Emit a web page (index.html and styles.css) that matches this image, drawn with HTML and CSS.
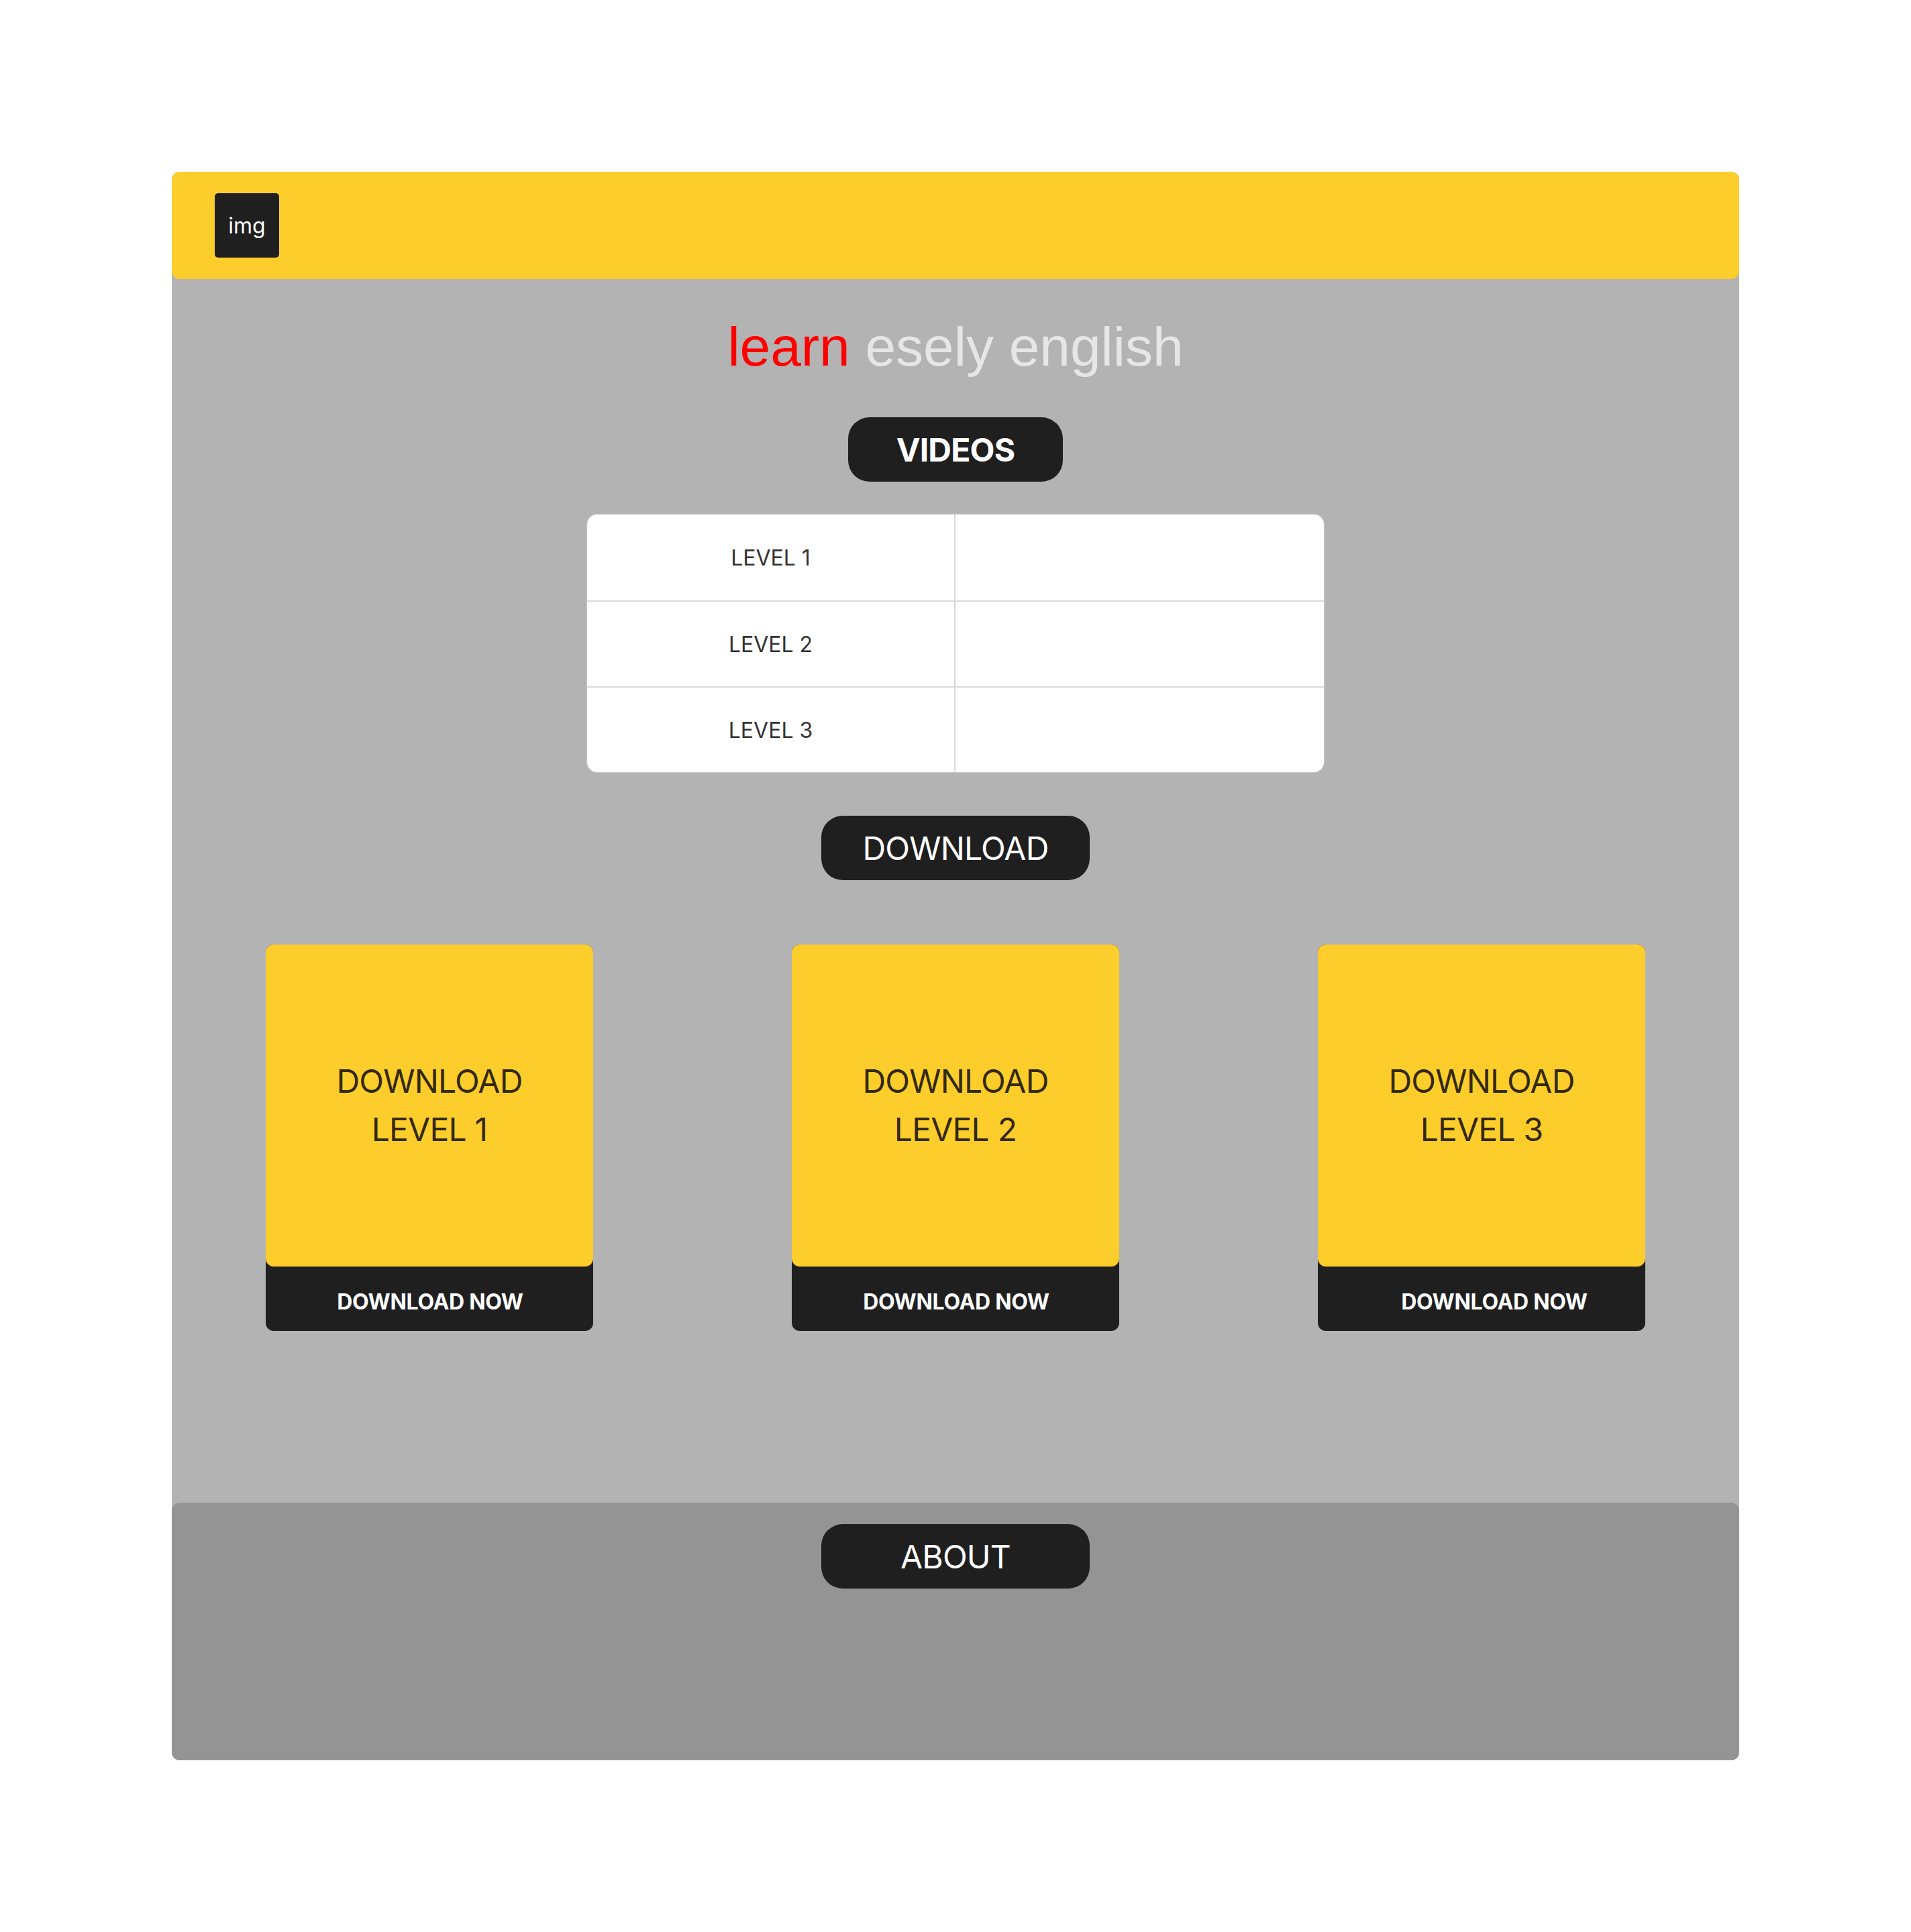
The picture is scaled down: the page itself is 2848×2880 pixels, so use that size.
FILE: index.html
```html
<!DOCTYPE html>
<html lang="en">
<head>
<meta charset="utf-8">
<title>learn esely english</title>
<link rel="stylesheet" href="styles.css">
</head>
<body>
<div class="page">
  <header class="topbar">
    <div class="logo">img</div>
  </header>
  <main class="content">
    <h1 class="title"><span class="title-red">learn</span> esely english</h1>
    <div class="pill pill-videos">VIDEOS</div>
    <div class="levels">
      <div class="level-row"><div class="level-name">LEVEL 1</div><div class="level-video"></div></div>
      <div class="level-row"><div class="level-name">LEVEL 2</div><div class="level-video"></div></div>
      <div class="level-row"><div class="level-name">LEVEL 3</div><div class="level-video"></div></div>
    </div>
    <div class="pill pill-wide">DOWNLOAD</div>
    <div class="cards">
      <div class="card">
        <div class="card-face">DOWNLOAD<br>LEVEL 1</div>
        <div class="card-action">DOWNLOAD NOW</div>
      </div>
      <div class="card">
        <div class="card-face">DOWNLOAD<br>LEVEL 2</div>
        <div class="card-action">DOWNLOAD NOW</div>
      </div>
      <div class="card">
        <div class="card-face">DOWNLOAD<br>LEVEL 3</div>
        <div class="card-action card-action-shift">DOWNLOAD NOW</div>
      </div>
    </div>
  </main>
  <footer class="about">
    <div class="pill pill-wide">ABOUT</div>
  </footer>
</div>
</body>
</html>
```
FILE: styles.css
```css
* { box-sizing: border-box; }

html, body {
  margin: 0;
  padding: 0;
  background: #ffffff;
}

body {
  font-family: Inter, "Noto Sans", "Liberation Sans", sans-serif;
  padding-top: 256px;
  padding-bottom: 256px;
}

.page {
  width: 2336px;
  margin: 0 auto;
  background: #b3b3b3;
  border-radius: 12px;
  display: flex;
  flex-direction: column;
}

.topbar {
  height: 160px;
  background: #fdcd2b;
  border-radius: 12px;
  display: flex;
  align-items: center;
  padding-left: 64px;
}

.logo {
  width: 96px;
  height: 96px;
  background: #1f1f1f;
  border-radius: 5px;
  color: #ffffff;
  font-size: 32px;
  display: flex;
  align-items: center;
  justify-content: center;
}

.content {
  display: flex;
  flex-direction: column;
  align-items: center;
  padding-top: 53px;
  padding-bottom: 256px;
}

.title {
  margin: 0;
  font-family: "Liberation Sans", Arial, sans-serif;
  font-size: 82px;
  line-height: 96px;
  font-weight: 400;
  color: #e6e6e6;
}

.title-red { color: #ff0000; }

.pill {
  height: 96px;
  border-radius: 32px;
  background: #1f1f1f;
  color: #ffffff;
  font-size: 48px;
  letter-spacing: -0.8px;
  display: flex;
  align-items: center;
  justify-content: center;
}

.pill-videos {
  width: 320px;
  margin-top: 57px;
  font-weight: 700;
}

.pill-wide {
  width: 400px;
}

.content .pill-wide { margin-top: 64px; }

.levels {
  margin-top: 48px;
  width: 1100px;
  background: #ffffff;
  border: 1px solid #c8c8c8;
  border-radius: 16px;
  overflow: hidden;
}

.level-row {
  display: grid;
  grid-template-columns: 1fr 1fr;
  height: 128px;
}

.level-row + .level-row { border-top: 2px solid #d9d9d9; }

.level-name {
  display: flex;
  align-items: center;
  justify-content: center;
  font-size: 32px;
  color: #333333;
  border-right: 2px solid #d9d9d9;
}

.cards {
  margin-top: 96px;
  width: 100%;
  padding: 0 140px;
  display: flex;
  justify-content: space-between;
}

.card {
  width: 488px;
  height: 576px;
  background: #1f1f1f;
  border-radius: 12px;
  display: flex;
  flex-direction: column;
}

.card-face {
  height: 480px;
  background: #fdcd2b;
  border-radius: 12px;
  display: flex;
  align-items: center;
  justify-content: center;
  text-align: center;
  font-size: 48px;
  line-height: 72px;
  letter-spacing: -0.8px;
  color: #332909;
}

.card-action {
  flex: 1;
  display: flex;
  align-items: center;
  justify-content: center;
  padding-top: 8px;
  padding-left: 2px;
  color: #ffffff;
  font-size: 32px;
  font-weight: 700;
  letter-spacing: -0.3px;
}

.card-action-shift { padding-left: 38px; }

.about {
  height: 384px;
  background: #949494;
  border-radius: 12px;
  display: flex;
  flex-direction: column;
  align-items: center;
  padding-top: 32px;
}
```
